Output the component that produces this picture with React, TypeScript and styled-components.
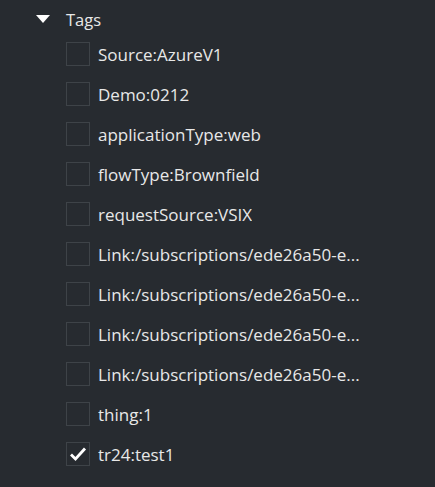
import { useState } from "react"
import styled, { createGlobalStyle } from "styled-components"

const Global = createGlobalStyle`
  html, body {
    margin: 0;
    background: #272b30;
  }
  body {
    font-family: "Open Sans", "Noto Sans", "Liberation Sans", sans-serif;
  }
`

const Panel = styled.div`
  width: 435px;
  height: 487px;
  background: #272b30;
  color: #e8e8e8;
  padding: 8px 0 0 36px;
  box-sizing: border-box;
  overflow: hidden;
`

const Header = styled.div`
  display: flex;
  align-items: center;
  gap: 16px;
  height: 22px;
  font-size: 16.5px;
  cursor: pointer;
`

const Caret = styled.span`
  width: 0;
  height: 0;
  border-left: 7px solid transparent;
  border-right: 7px solid transparent;
  border-top: 8px solid #ffffff;
`

const List = styled.ul`
  list-style: none;
  margin: 12px 0 0 30px;
  padding: 0;
  display: flex;
  flex-direction: column;
  gap: 16px;
`

const Row = styled.li`
  display: flex;
  align-items: center;
  gap: 8px;
  height: 24px;
  cursor: pointer;
`

const Box = styled.span`
  width: 24px;
  height: 24px;
  box-sizing: border-box;
  border: 1px solid #3e4348;
  display: flex;
  align-items: center;
  justify-content: center;
  flex-shrink: 0;
`

const Label = styled.span`
  font-size: 17px;
  white-space: nowrap;
  overflow: hidden;
  text-overflow: ellipsis;
  max-width: 290px;
`

const tags = [
  "Source:AzureV1",
  "Demo:0212",
  "applicationType:web",
  "flowType:Brownfield",
  "requestSource:VSIX",
  "Link:/subscriptions/ede26a50-e...",
  "Link:/subscriptions/ede26a50-e...",
  "Link:/subscriptions/ede26a50-e...",
  "Link:/subscriptions/ede26a50-e...",
  "thing:1",
  "tr24:test1",
]

function Check() {
  return (
    <svg width="18" height="16" viewBox="0 0 18 16">
      <path d="M2 8.5 L6.5 13 L16 2.5" fill="none" stroke="#ffffff" strokeWidth="2.8" />
    </svg>
  )
}

export default function App() {
  const [checked, setChecked] = useState<boolean[]>(tags.map((_, i) => i === tags.length - 1))

  const toggle = (i: number) => {
    setChecked(c => c.map((v, j) => (j === i ? !v : v)))
  }

  return (
    <Panel>
      <Global />
      <Header>
        <Caret />
        <span>Tags</span>
      </Header>
      <List>
        {tags.map((t, i) => (
          <Row key={i} onClick={() => toggle(i)}>
            <Box>{checked[i] && <Check />}</Box>
            <Label>{t}</Label>
          </Row>
        ))}
      </List>
    </Panel>
  )
}
